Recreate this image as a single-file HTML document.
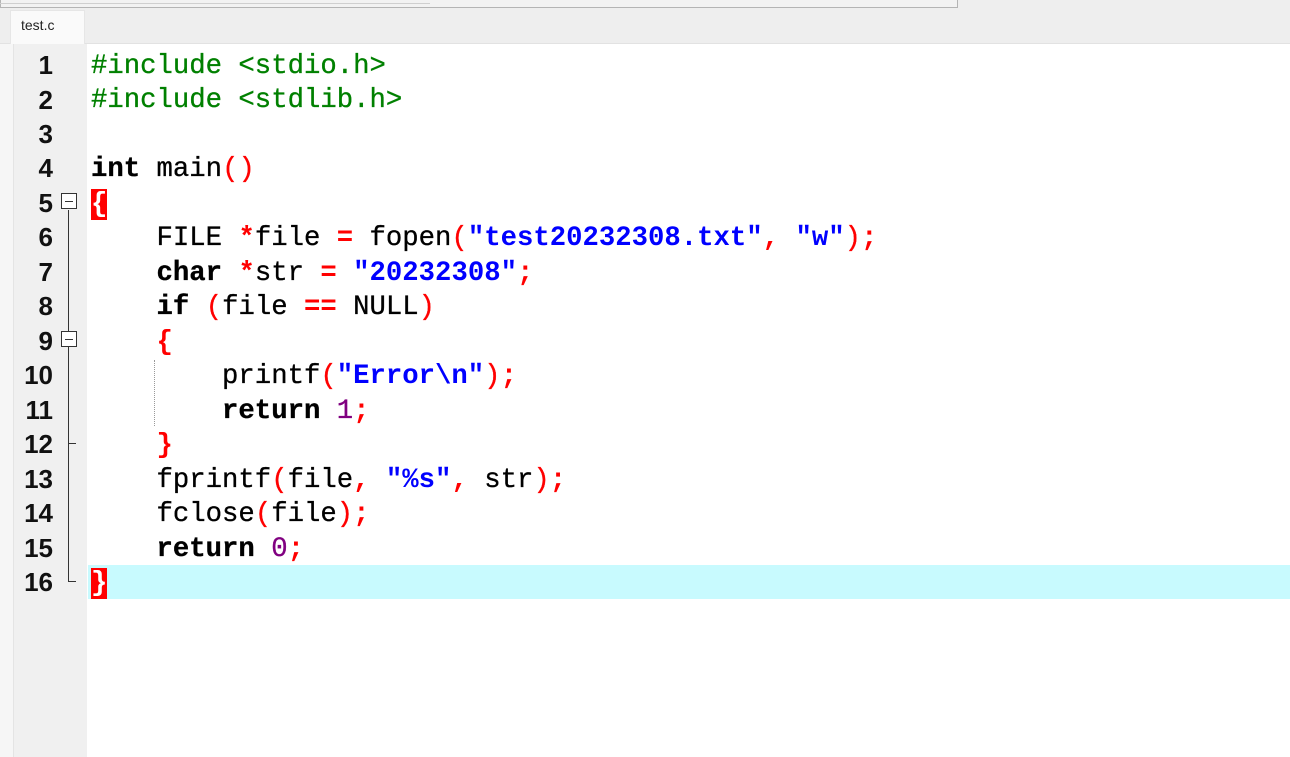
<!DOCTYPE html>
<html><head><meta charset="utf-8"><style>
*{margin:0;padding:0;box-sizing:border-box}
body{width:1290px;height:757px;overflow:hidden;background:#fff;position:relative;font-family:"Liberation Mono",monospace}
.top{position:absolute;left:0;top:0;width:1290px;height:44px;background:#eeeeee;border-bottom:1px solid #e2e2e2}
.sb{position:absolute;left:0;top:0;width:958px;height:8px;border:1px solid #b4b4b4;border-top:none;background:#f2f2f2}
.sb2{position:absolute;left:0;top:0;width:430px;height:4px;border-bottom:1px solid #cfcfcf}
.tab{position:absolute;left:10px;top:10px;width:75px;height:34px;background:#fafafa;border:1px solid #e6e6e6;border-bottom:none;font:14px "Liberation Sans",sans-serif;color:#222;padding:6px 0 0 10px}
.lstrip{position:absolute;left:0;top:44px;width:14px;height:713px;background:#f6f6f6;border-right:1px solid #e4e4e4}
.gut{position:absolute;left:14px;top:44px;width:73px;height:713px;background:#f0f0f0}
.hl{position:absolute;left:88px;top:565px;width:1202px;height:34px;background:#c8fafe}
.ln{position:absolute;left:0;width:53px;text-align:right;font-size:26px;font-weight:bold;line-height:34.47px;color:#111;font-family:"Liberation Sans",sans-serif}
.code{position:absolute;left:91px;top:50px;font-size:27.3px;line-height:34.47px;white-space:pre;color:#000;-webkit-text-stroke:0.3px #000}
.g{color:#008000;-webkit-text-stroke:0.3px #008000}.k{font-weight:bold}.o{color:#f00;font-weight:bold;-webkit-text-stroke:0}.p{color:#f00;-webkit-text-stroke:0.3px #f00}.s{color:#0000ff;font-weight:bold;-webkit-text-stroke:0}.n{color:#800080;-webkit-text-stroke:0.3px #800080}
.bb{background:#f00;color:#fff}
.fold{position:absolute;left:61px;width:16px;height:16px;border:1px solid #333;background:#fff}
.fold:after{content:"";position:absolute;left:3px;top:7px;width:8px;height:1px;background:#333}
.vl{position:absolute;left:68px;width:1px;background:#333}
.hz{position:absolute;left:68px;height:1px;width:8px;background:#333}
.dot{position:absolute;left:154px;top:360px;height:66px;border-left:1px dotted #999}
</style></head><body>
<div class="top"><div class="sb"></div><div class="sb2"></div><div class="tab">test.c</div></div>
<div class="lstrip"></div>
<div class="gut"></div>
<div class="hl"></div>
<div class="ln" style="top:48px">1</div>
<div class="ln" style="top:82.5px">2</div>
<div class="ln" style="top:116.9px">3</div>
<div class="ln" style="top:151.4px">4</div>
<div class="ln" style="top:185.9px">5</div>
<div class="ln" style="top:220.4px">6</div>
<div class="ln" style="top:254.8px">7</div>
<div class="ln" style="top:289.3px">8</div>
<div class="ln" style="top:323.8px">9</div>
<div class="ln" style="top:358.2px">10</div>
<div class="ln" style="top:392.7px">11</div>
<div class="ln" style="top:427.2px">12</div>
<div class="ln" style="top:461.6px">13</div>
<div class="ln" style="top:496.1px">14</div>
<div class="ln" style="top:530.6px">15</div>
<div class="ln" style="top:565px">16</div>
<div class="vl" style="top:210px;height:372px"></div>
<div class="hz" style="top:443px"></div>
<div class="hz" style="top:581px"></div>
<div class="fold" style="top:193px"></div>
<div class="fold" style="top:331px"></div>
<div class="dot"></div>
<div class="code"><span class="g">#include &lt;stdio.h&gt;</span>
<span class="g">#include &lt;stdlib.h&gt;</span>

<span class="k">int</span> main<span class="p">()</span>
<span class="o bb">{</span>
    FILE <span class="o">*</span>file <span class="o">=</span> fopen<span class="p">(</span><span class="s">"test20232308.txt"</span><span class="o">,</span> <span class="s">"w"</span><span class="p">)</span><span class="o">;</span>
    <span class="k">char</span> <span class="o">*</span>str <span class="o">=</span> <span class="s">"20232308"</span><span class="o">;</span>
    <span class="k">if</span> <span class="p">(</span>file <span class="o">==</span> NULL<span class="p">)</span>
    <span class="o">{</span>
        printf<span class="p">(</span><span class="s">"Error\n"</span><span class="p">)</span><span class="o">;</span>
        <span class="k">return</span> <span class="n">1</span><span class="o">;</span>
    <span class="o">}</span>
    fprintf<span class="p">(</span>file<span class="o">,</span> <span class="s">"%s"</span><span class="o">,</span> str<span class="p">)</span><span class="o">;</span>
    fclose<span class="p">(</span>file<span class="p">)</span><span class="o">;</span>
    <span class="k">return</span> <span class="n">0</span><span class="o">;</span>
<span class="o bb">}</span></div>
</body></html>
